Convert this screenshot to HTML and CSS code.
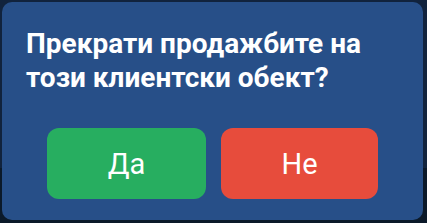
FILE: index.html
```html
<!DOCTYPE html>
<html lang="bg">
<head>
  <meta charset="UTF-8" />
  <title>Потвърждение</title>
  <link rel="stylesheet" href="styles.css">
</head>
<body>
  <div class="backdrop">
    <div class="backdrop-top"></div>
    <div class="backdrop-bottom"></div>
  </div>
  <div class="dialog">
    <h2 class="question">Прекрати продажбите на този клиентски обект?</h2>
    <div class="actions">
      <button class="btn btn-yes">Да</button>
      <button class="btn btn-no">Не</button>
    </div>
  </div>
</body>
</html>
```

FILE: styles.css
```css
body {
  margin: 0;
  width: 427px;
  height: 223px;
  overflow: hidden;
  font-family: Roboto, 'Noto Sans', sans-serif;
  background: #0c1a2c;
  position: relative;
}
.backdrop {
  position: absolute;
  inset: 0;
  display: flex;
  flex-direction: column;
}
.backdrop-top {
  height: 168px;
  background: #11233d;
}
.backdrop-bottom {
  flex: 1;
  background: #0b1929;
}
.dialog {
  position: absolute;
  left: 2px;
  top: 2px;
  width: 421px;
  height: 218px;
  box-sizing: border-box;
  background: #274f88;
  border-radius: 10px;
  padding: 25px 24px 0 24px;
}
.question {
  margin: 0;
  max-width: 350px;
  color: #fff;
  font-size: 28px;
  font-weight: 700;
  line-height: 34px;
}
.actions {
  display: flex;
  gap: 15px;
  margin: 33px 0 0 21px;
}
.btn {
  height: 71px;
  border: none;
  border-radius: 12px;
  color: #fff;
  font-family: Roboto, sans-serif;
  font-size: 29px;
}
.btn-yes {
  background: #27ae60;
  width: 159px;
}
.btn-no {
  background: #e74c3c;
  width: 157px;
}
```
